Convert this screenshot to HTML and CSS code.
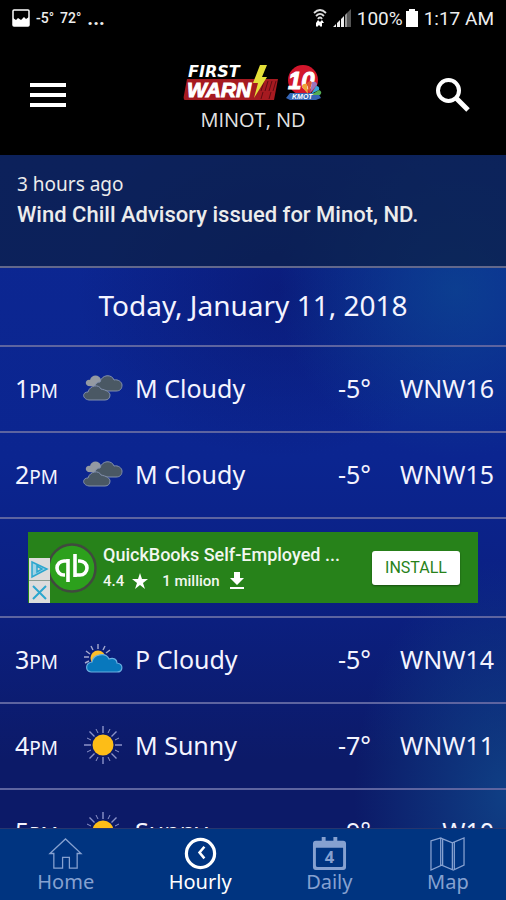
FILE: index.html
```html
<!DOCTYPE html>
<html lang="en">
<head>
<meta charset="utf-8">
<meta name="viewport" content="width=device-width, initial-scale=1">
<title>Hourly Forecast</title>
<link rel="stylesheet" href="styles.css">
</head>
<body>
<svg class="defs" aria-hidden="true">
  <symbol id="mcloudy" viewBox="0 0 40 28">
    <path fill="#949aa2" d="M5 12c-4-2-2-7 2-6 1-6 10-6 11 0 4 1 3 5 0 7z"/>
    <path fill="#4a5864" stroke="#8290ad" d="M14 17c-4-3-2-9 3-9 2-8 12-8 14-2 4-1 8 2 8 5 0 4-2 6-6 6z"/>
    <path fill="#4a5864" stroke="#8290ad" d="M6 26c-7-1-7-8-1-8 2-7 11-8 13-3 5 1 9 3 9 6 0 3-2 5-5 5z"/>
  </symbol>
  <symbol id="sun" viewBox="0 0 40 40">
    <g stroke="#8c93c9" stroke-width="1.4">
      <path d="M20 1v7M20 32v7M1 20h7M32 20h7M6.500 6.500l5 5M28.500 28.500l5 5M6.500 33.500l5-5M28.500 11.500l5-5"/>
      <path d="M13 4l2 4M27 4l-2 4M13 36l2-4M27 36l-2-4M4 13l4 2M4 27l4-2M36 13l-4 2M36 27l-4-2" stroke-width="1"/>
    </g>
    <circle cx="20" cy="20" r="10.500" fill="#fdbd17"/>
  </symbol>
  <symbol id="pcloudy" viewBox="0 0 40 32">
    <path stroke="#a5a9cf" stroke-width="1.400" d="M15 1v5M8 3l2 4M22 3l-2 4M3 8l4 3M27 7l-4 3M1 14h5M2 20l4-2"/>
    <circle cx="15" cy="15" r="7.500" fill="#fbbd2b"/>
    <path fill="#0878bd" stroke="#68aee0" stroke-width="1.200" d="M8 29c-6-1-6-9 1-10 1-8 14-10 17-3 5-2 8 1 8 4 7 1 6 9 0 9z"/>
  </symbol>
</svg>
<div class="app">
  <div class="status">
    <svg class="pic" viewBox="0 0 18 18"><rect x="1" y="1" width="16" height="16" rx="1" fill="none" stroke="#fff" stroke-width="1.500"/><path fill="#fff" d="M1 17V9l3 2 2-2 3 2 3-3 2 2 3-2v9z"/></svg>
    <span class="mini">-5°</span><span class="mini">72°</span><span class="dots">...</span>
    <span class="grow"></span>
    <svg class="wifi" viewBox="0 0 14 18"><path fill="none" stroke="#ddd" stroke-width="1.800" d="M1 4c4-4 8-4 12 0M3 7c3-3 5-3 8 0M5 10c1-2 3-2 4 0"/><path fill="#fff" d="M3 14l2-3 2 2 2-2 2 3-2 0v3l-1 1-2-2-2 2-1-1z"/></svg>
    <svg class="signal" viewBox="0 0 18 18"><path fill="#eee" d="M0 18l3-3v3zM4 18v-4l3-3v7zM8 18v-8l3-3v11z"/><path fill="#999" d="M12 18V6l2-2v14z"/><path fill="#555" d="M14 18V4l4-4v18z"/></svg>
    <span class="clock">100%</span>
    <svg class="battery" viewBox="0 0 12 18"><path fill="#fff" d="M0 2h3V0h6v2h3v16H0z"/></svg>
    <span class="clock">1:17 AM</span>
  </div>
  <header class="top">
    <button class="icon-btn" aria-label="Menu"><svg class="menu" viewBox="0 0 36 24"><path fill="#fff" d="M0 0h36v4H0zM0 10h36v4H0zM0 20h36v4H0z"/></svg></button>
    <div class="brand">
      <svg class="logo" viewBox="0 0 140 38" role="img" aria-label="First Warn 10">
        <path fill="#a61a20" d="M4 15h91l-4 21H2q-2 0-1-5z"/>
        <path stroke="#5e0c13" stroke-width="1" d="M77 17l-3 10M81 17l-3 10M85 17l-3 10M89 17l-3 10M93 17l-3 10M80 28l-2 7M88 28l-2 7"/>
        <text class="first" x="5" y="13">FIRST</text>
        <text class="warn" x="4" y="33">WARN</text>
        <path fill="#e4df38" d="M77 1h7l-5 12h5L71 34l4-15h-5z"/>
        <circle cx="120" cy="16" r="15" fill="#d2162c"/>
        <path fill="#3565b4" d="M107 29h28l3 5-5 2h-26l-4-2z"/>
        <text class="ten" x="105" y="25">10</text>
        <path fill="#f0a334" d="M125 30l-6-7q0-4 5-3z"/><path fill="#df5a31" d="M126 29l-2-10q4-4 5 0z"/><path fill="#9a75bd" d="M127 29l2-11q5-1 5 3z"/><path fill="#39a4d8" d="M128 30l5-8q4 0 3 4z"/><path fill="#54ae55" d="M128 31l8-5q4 2 1 5z"/>
        <text class="call" x="109" y="35">KMOT</text>
      </svg>
      <div class="city">MINOT, ND</div>
    </div>
    <button class="icon-btn find" aria-label="Search"><svg class="search" viewBox="0 0 34 34"><circle cx="12.500" cy="12.500" r="10.500" fill="none" stroke="#fff" stroke-width="4"/><path stroke="#fff" stroke-width="5" d="M20 20l12 12"/></svg></button>
  </header>
  <main class="forecast">
    <section class="alert"><div class="ago">3 hours ago</div><div class="advisory">Wind Chill Advisory issued for Minot, ND.</div></section>
    <h1 class="day">Today, January 11, 2018</h1>
    <div class="row"><span>1<small>PM</small></span><svg class="wx" viewBox="0 0 40 28"><use href="#mcloudy"/></svg><span>M Cloudy</span><span class="num">-5°</span><span class="num">WNW16</span></div>
    <div class="row"><span>2<small>PM</small></span><svg class="wx" viewBox="0 0 40 28"><use href="#mcloudy"/></svg><span>M Cloudy</span><span class="num">-5°</span><span class="num">WNW15</span></div>
    <aside class="ad-slot">
      <div class="ad">
        <div class="choices">
          <svg viewBox="0 0 21 22"><path fill="#9fd3e6" stroke="#2ba6ce" stroke-width="1.500" d="M3 4l15 7-15 8zM8 8v6l5-3z"/></svg>
          <svg viewBox="0 0 21 22"><path stroke="#2ba6ce" stroke-width="2" d="M4 5l13 13M17 5L4 18"/></svg>
        </div>
        <svg class="qb" viewBox="0 0 50 50"><circle cx="25" cy="25" r="23.500" fill="#2ca01c" stroke="#404a3e" stroke-width="2.500"/><path fill="none" stroke="#fff" stroke-width="3.600" d="M21 18h-4a7 7 0 0 0 0 14h1M21 16v23M29 32h4a7 7 0 0 0 0-14h-2M28 11v23"/></svg>
        <div class="ad-copy">
          <div class="ad-title">QuickBooks Self-Employed ...</div>
          <div class="ad-meta"><span>4.4</span><svg class="star" viewBox="0 0 16 16"><path fill="#fff" d="M8 0l2 6h6l-5 4 2 6-5-4-5 4 2-6-5-4h6z"/></svg><span>1 million</span><svg class="down" viewBox="0 0 16 18"><path fill="#fff" d="M5 0h6v6h4l-7 7-7-7h4zM1 15h14v2H1z"/></svg></div>
        </div>
        <button class="install">INSTALL</button>
      </div>
    </aside>
    <div class="row"><span>3<small>PM</small></span><svg class="wx" viewBox="0 0 40 32"><use href="#pcloudy"/></svg><span>P Cloudy</span><span class="num">-5°</span><span class="num">WNW14</span></div>
    <div class="row"><span>4<small>PM</small></span><svg class="wx" viewBox="0 0 40 40"><use href="#sun"/></svg><span>M Sunny</span><span class="num">-7°</span><span class="num">WNW11</span></div>
    <div class="row"><span>5<small>PM</small></span><svg class="wx" viewBox="0 0 40 40"><use href="#sun"/></svg><span>Sunny</span><span class="num">-9°</span><span class="num">W10</span></div>
  </main>
  <nav class="tabs">
    <a href="#home"><svg viewBox="0 0 36 36"><path fill="none" stroke="currentColor" stroke-width="1.300" d="M2 18L18 3l16 15h-4v15h-8V22h-7v11H6V18z"/></svg>Home</a>
    <a href="#hourly" class="active" aria-current="page"><svg viewBox="0 0 36 36"><circle cx="18" cy="18" r="14.500" fill="none" stroke="currentColor" stroke-width="3.300"/><path fill="none" stroke="currentColor" stroke-width="2.600" d="M22 11l-5 6 5 6"/></svg>Hourly</a>
    <a href="#daily"><svg viewBox="0 0 36 36"><path fill="currentColor" fill-rule="evenodd" d="M4 5h6V1h4v4h8V1h4v4h6q3 0 3 3v24q0 3-3 3H4q-3 0-3-3V8q0-3 3-3zM4 12v18q0 2 2 2h24q2 0 2-2V12z"/><text class="date" x="13" y="28">4</text></svg>Daily</a>
    <a href="#map"><svg viewBox="0 0 36 36"><path fill="none" stroke="currentColor" stroke-width="1.300" d="M1 5l10-3 2 1 10 4 12-5v28l-11 5-12-5-11 5zM11 2v28M13 3v27M23 7v28M25 6v28"/></svg>Map</a>
  </nav>
</div>
</body>
</html>
```
FILE: styles.css
```css
* { box-sizing: border-box; }
body { margin: 0; background: #000; color: #f4f4ff; font-family: "Noto Sans", "Open Sans", sans-serif; }
.defs { position: absolute; width: 0; height: 0; }
button { border: 0; padding: 0; background: none; }
svg { display: block; flex: none; }
.app { height: 100vh; display: flex; flex-direction: column; overflow: hidden; }

.status { flex: none; height: 36px; padding: 0 12px; display: flex; align-items: center; color: #eee; font-family: Roboto, sans-serif; }
.pic { width: 18px; height: 18px; margin-right: 6px; }
.mini { font-size: 14px; font-weight: 500; margin-right: 6px; }
.dots { font-size: 20px; font-weight: 700; }
.grow { flex: 1; }
.wifi { width: 14px; height: 18px; margin-right: 6px; }
.signal { width: 18px; height: 18px; margin-right: 6px; }
.clock { font-size: 19px; }
.battery { width: 12px; height: 18px; margin: 0 6px 0 3px; }

.top { flex: none; height: 119px; padding: 0 30px; display: grid; grid-template-columns: 1fr auto 1fr; align-items: center; }
.icon-btn { display: flex; padding-bottom: 2px; }
.find { justify-content: flex-end; padding-right: 6px; }
.menu { width: 36px; height: 24px; }
.search { width: 34px; height: 34px; }
.brand { display: flex; flex-direction: column; align-items: center; padding-top: 6px; }
.logo { width: 140px; height: 38px; }
.city { font-size: 20px; line-height: 28px; font-family: "Open Sans", sans-serif; color: #e4e4e4; margin-top: 4px; }
.first { font: italic 700 16px "DejaVu Sans", sans-serif; fill: #fff; }
.warn { font: italic 700 21px "Liberation Sans", sans-serif; fill: #fff; stroke: #fff; stroke-width: 1; }
.ten { font: italic 700 24px "Liberation Sans", sans-serif; fill: #fff; stroke: #fff; stroke-width: 1; }
.call { font: italic 700 7px "Liberation Sans", sans-serif; fill: #fff; }

.forecast {
  flex: 1; min-height: 0; overflow: hidden;
  background:
    radial-gradient(ellipse 35% 25% at 90% 20%, rgba(12, 70, 145, .75), transparent),
    radial-gradient(ellipse 30% 35% at 100% 95%, rgba(16, 72, 140, .8), transparent),
    radial-gradient(ellipse 40% 25% at 55% 20%, rgba(10, 22, 110, .6), transparent),
    linear-gradient(#0c2792 0%, #0b2590 45%, #0b2083 65%, #0c1a68 90%);
}
.alert { height: 113px; padding: 15px 17px; background: rgba(12, 32, 72, .75); border-bottom: 2px solid #62688c; color: #ececec; }
.ago { font-size: 19px; line-height: 28px; }
.advisory { font: 500 22px/34px Roboto, sans-serif; }
.day { margin: 0; height: 79px; border-bottom: 2px solid #5d64a0; font-size: 28px; font-weight: 400; line-height: 74px; text-align: center; }
.row {
  height: 86px; padding: 0 12px 2px 15px; border-bottom: 2px solid #5d64a0;
  display: grid; grid-template-columns: 68px 52px 1fr auto 123px; align-items: center;
  font-size: 25px;
}
.row small { font-size: 19px; }
.wx { width: 40px; }
.num { text-align: right; }

.ad-slot { height: 99px; padding: 13px 28px; border-bottom: 2px solid #5d64a0; }
.ad { position: relative; height: 71px; padding: 0 18px 0 19px; display: flex; align-items: center; background: #27821a; font-family: Roboto, sans-serif; color: #f2f7f0; }
.choices { position: absolute; left: 1px; bottom: 0; display: grid; gap: 1px; background: #8a9a90; }
.choices svg { width: 21px; height: 22px; background: #dcdcdc; }
.qb { width: 50px; height: 50px; margin-right: 6px; }
.ad-copy { flex: 1; }
.ad-title { font-size: 18px; font-weight: 500; line-height: 26px; }
.ad-meta { display: flex; align-items: center; font-size: 15px; font-weight: 500; line-height: 26px; }
.star { width: 16px; height: 16px; margin: 0 14px 0 8px; }
.down { width: 16px; height: 18px; margin-left: 9px; }
.install { width: 88px; height: 34px; border-radius: 3px; background: #fff; color: #27821a; font: 400 16px Roboto, sans-serif; box-shadow: 0 1px 2px rgba(0, 0, 0, .4); }

.tabs { flex: none; height: 72px; padding-top: 7px; display: flex; justify-content: space-around; background: #003480; border-top: 1px solid #26366f; }
.tabs a { display: flex; flex-direction: column; align-items: center; color: #86a1d0; font-size: 20px; line-height: 22px; text-decoration: none; }
.tabs svg { width: 35px; height: 35px; }
.tabs .active { color: #fff; }
.date { font: 700 17px "Open Sans", sans-serif; fill: currentColor; }
```
